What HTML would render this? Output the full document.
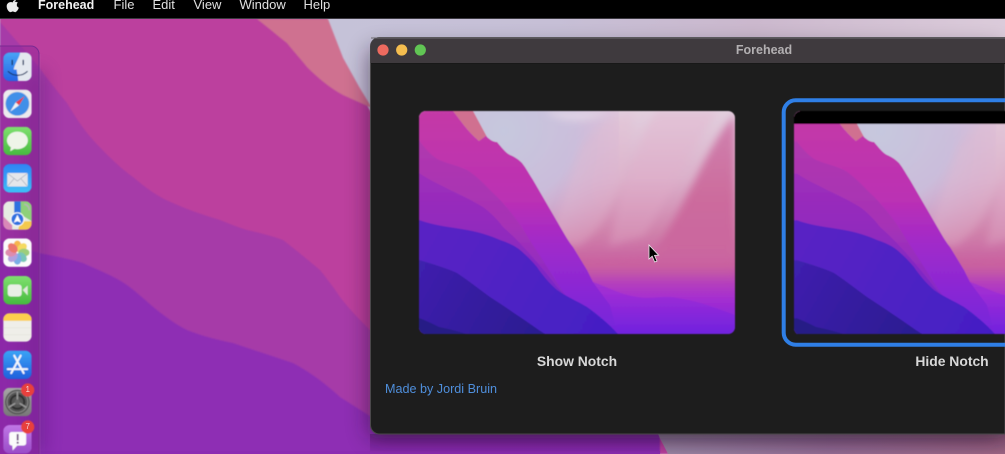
<!DOCTYPE html>
<html><head><meta charset="utf-8">
<style>
html,body{margin:0;padding:0;width:1005px;height:454px;overflow:hidden;background:#000}
#s{position:relative;width:1005px;height:454px;overflow:hidden;font-family:"Liberation Sans",sans-serif}
svg{position:absolute;left:0;top:0;display:block}
.t{position:absolute;white-space:nowrap;line-height:16px}
.m{top:-3px;font-size:13px;color:#e0e0e0}
</style></head><body><div id="s">
<svg width="1005" height="454" viewBox="0 0 1005 454">
<defs>
<linearGradient id="sky" gradientUnits="userSpaceOnUse" x1="0" y1="0" x2="0" y2="223">
<stop offset="0" stop-color="#e2cfde"/><stop offset=".3" stop-color="#dbb0ca"/><stop offset=".55" stop-color="#cf80aa"/><stop offset=".69" stop-color="#c85fa0"/><stop offset=".77" stop-color="#b540bc"/><stop offset=".84" stop-color="#a52ed0"/><stop offset="1" stop-color="#7a24dc"/>
</linearGradient>
<radialGradient id="lav" gradientUnits="userSpaceOnUse" cx="85" cy="20" r="130">
<stop offset="0" stop-color="#c6c8de"/><stop offset=".55" stop-color="#c9bedc" stop-opacity=".9"/><stop offset="1" stop-color="#cfa8d4" stop-opacity="0"/>
</radialGradient>
<linearGradient id="slope" gradientUnits="userSpaceOnUse" x1="0" y1="0" x2="0" y2="170"><stop offset="0" stop-color="#d084b0"/><stop offset=".5" stop-color="#cc6c9d"/><stop offset=".8" stop-color="#cb669e"/><stop offset="1" stop-color="#c85fa0" stop-opacity="0"/></linearGradient>
<linearGradient id="mag" gradientUnits="userSpaceOnUse" x1="0" y1="0" x2="0" y2="223"><stop offset="0" stop-color="#c43aa6"/><stop offset=".4" stop-color="#bb30b4"/><stop offset=".6" stop-color="#a02aca"/><stop offset=".8" stop-color="#8a28d4"/><stop offset="1" stop-color="#7424dc"/></linearGradient>
<linearGradient id="l1" gradientUnits="userSpaceOnUse" x1="0" y1="30" x2="0" y2="200"><stop offset="0" stop-color="#b038ae"/><stop offset=".5" stop-color="#a632b6"/><stop offset="1" stop-color="#7d26cc"/></linearGradient>
<linearGradient id="l2" gradientUnits="userSpaceOnUse" x1="0" y1="60" x2="0" y2="200"><stop offset="0" stop-color="#9e2eba"/><stop offset=".5" stop-color="#8f2abe"/><stop offset="1" stop-color="#6e24cc"/></linearGradient>
<linearGradient id="fr" gradientUnits="userSpaceOnUse" x1="0" y1="180" x2="0" y2="223"><stop offset="0" stop-color="#9a2bd8"/><stop offset="1" stop-color="#6c22e0"/></linearGradient>
<linearGradient id="deep" gradientUnits="userSpaceOnUse" x1="0" y1="110" x2="200" y2="223"><stop offset="0" stop-color="#5a24c4"/><stop offset="1" stop-color="#431fc4"/></linearGradient>
<linearGradient id="dk" gradientUnits="userSpaceOnUse" x1="0" y1="150" x2="126" y2="223"><stop offset="0" stop-color="#3f20ae"/><stop offset="1" stop-color="#2a1c90"/></linearGradient>
<clipPath id="c1"><rect width="316" height="223" rx="7"/></clipPath>
<clipPath id="c2"><rect width="300" height="224" rx="7"/></clipPath>
<filter id="soft" x="-20%" y="-20%" width="140%" height="140%"><feGaussianBlur stdDeviation="4"/></filter>
<filter id="e" x="-2%" y="-2%" width="104%" height="104%"><feGaussianBlur stdDeviation=".5"/></filter>
<g id="wp">
<rect width="316" height="223" fill="url(#sky)"/>
<rect x="0" y="0" width="200" height="155" fill="url(#lav)"/>
<g filter="url(#soft)">
<path d="M125 0C140 10 165 15 190 0Z" fill="#e8dde8" opacity=".7"/>
<path d="M165 35C180 12 195 5 215 0L205 60C195 100 180 120 160 135L125 135C140 110 150 70 165 30Z" fill="#e2bcd2" opacity=".35"/>
<path d="M205 70C222 40 222 20 238 0L300 0C275 30 255 80 225 125L190 135Z" fill="#e2b0cc" opacity=".35"/>
<path d="M316 4C290 30 268 95 232 145L130 150L130 178L316 178Z" fill="url(#slope)"/>
</g>
<path d="M34 0H54L68 26L60 30C48 20 42 10 34 0Z" fill="#d06f90"/>
<path d="M0 0H34C42 10 48 20 60 30L67 25C72 30 75 31 78 31C83 37 87 42 91 44C96 46 100 49 103 52C107 57 110 63 114 69L143 119C147 126 150 131 154 136L168 159L174 171L191 194L199 223H0Z" fill="url(#mag)"/>
<path d="M0 29C6 38 14 46 20 49C30 53 40 55 48 59C58 65 66 74 74 82C85 92 100 110 110 128L150 190L170 223H0Z" fill="url(#l1)"/>
<path d="M0 62C12 70 22 74 31 79C42 84 54 90 64 96C72 102 78 108 84 116C100 130 118 150 138 176L180 223H0Z" fill="url(#l2)"/>
<path d="M174 171C188 176 203 184 218 186C232 189 245 184 258 187C280 190 300 198 316 204V223H199L191 194Z" fill="url(#fr)" opacity=".7"/>
<path d="M0 109C16 115 32 116 48 119C60 121 72 125 81 129C90 132 96 135 101 139C108 145 113 150 118 156C124 165 131 173 138 179C148 186 158 190 168 196C178 203 190 213 199 223H0Z" fill="url(#deep)"/>
<path d="M0 149C14 153 27 157 38 162C50 170 60 178 71 186C82 193 92 200 101 206C110 212 118 218 126 223H0Z" fill="url(#dk)"/>
<path d="M0 207C8 210 14 213 20 216C30 218 38 220 47 223H0Z" fill="#281a86"/>
</g>
<linearGradient id="top" x1="0" y1="0" x2="1" y2="0"><stop offset="0" stop-color="#c4c7dc"/><stop offset=".55" stop-color="#c6bfd6"/><stop offset=".75" stop-color="#cbb8cd"/><stop offset="1" stop-color="#dbcbda"/></linearGradient>
<linearGradient id="bot" gradientUnits="userSpaceOnUse" x1="658" y1="0" x2="1005" y2="0"><stop offset="0" stop-color="#9a86a4"/><stop offset=".5" stop-color="#946c94"/><stop offset="1" stop-color="#9c6484"/></linearGradient>
<linearGradient id="botS" x1="0" y1="0" x2="0" y2="1"><stop offset="0" stop-color="#1a0a24" stop-opacity=".25"/><stop offset="1" stop-color="#1a0a24" stop-opacity="0"/></linearGradient>
<linearGradient id="i1" x1="0" y1="0" x2="0" y2="1"><stop offset="0" stop-color="#48a4f6"/><stop offset="1" stop-color="#2464e4"/></linearGradient>
<linearGradient id="i2" x1="0" y1="0" x2="0" y2="1"><stop offset="0" stop-color="#7fe06f"/><stop offset="1" stop-color="#46bb3f"/></linearGradient>
<linearGradient id="i3" x1="0" y1="0" x2="0" y2="1"><stop offset="0" stop-color="#2f82f4"/><stop offset="1" stop-color="#3ec0f8"/></linearGradient>
<linearGradient id="i4" x1="0" y1="0" x2="0" y2="1"><stop offset="0" stop-color="#a8a8a8"/><stop offset="1" stop-color="#777"/></linearGradient>
<linearGradient id="i5" x1="0" y1="0" x2="0" y2="1"><stop offset="0" stop-color="#c077e6"/><stop offset="1" stop-color="#9a4cc8"/></linearGradient>
<linearGradient id="i6" x1="0" y1="0" x2="0" y2="1"><stop offset="0" stop-color="#3aa4f6"/><stop offset="1" stop-color="#1f5fdc"/></linearGradient>
<filter id="sh" x="-20%" y="-20%" width="140%" height="140%"><feGaussianBlur stdDeviation="11"/></filter>
<filter id="ds" x="-200%" y="-20%" width="500%" height="140%"><feGaussianBlur stdDeviation="9"/></filter>
<filter id="b" x="-10%" y="-10%" width="120%" height="120%"><feGaussianBlur stdDeviation=".5"/></filter>
<filter id="d" x="-3%" y="-3%" width="106%" height="106%"><feGaussianBlur stdDeviation=".9"/></filter>
<clipPath id="ic"><rect width="28.5" height="28.5" rx="6.5"/></clipPath>
</defs>

<!-- desktop -->
<rect width="1005" height="454" fill="url(#top)"/>
<g filter="url(#d)">
<path d="M257 15H326L343 58L358 85L368 107L440 230L658 434L670 454H0V15Z" fill="#bc3f9e"/>
<path d="M257 19C270 29 278 36 287 43C294 52 300 58 307 67C318 78 330 88 343 95L372 108L358 85L343 58L328 19Z" fill="#cf7190"/>
<path d="M0 22C14 38 28 54 39 67C48 80 58 92 67 103C76 118 84 130 93 140C106 154 120 168 133 177C146 188 158 197 173 203C188 210 204 215 220 220C230 224 240 228 247 230C260 233 272 236 283 240C296 250 308 260 320 270C328 280 334 288 340 297C350 310 360 320 372 332L372 454H0Z" fill="#a63aa8"/>
<path d="M0 240L39 253C55 256 70 259 83 263C98 270 114 276 127 285C138 293 147 302 157 310C167 318 177 325 187 330C202 336 218 340 233 343C253 350 273 356 293 363C310 372 326 384 340 397L430 454H0Z" fill="#8e2db4"/>
<rect x="370" y="425" width="290" height="29" fill="#8a2ab0"/>
</g>
<rect y="451" width="660" height="3" fill="#8c2cb2"/>
<rect width="3" y="250" height="204" fill="#8e2db4"/>
<path d="M658 434L668 454H1005V434Z" fill="url(#bot)"/>
<rect x="370" y="434" width="635" height="20" fill="url(#botS)"/>

<!-- dock shadow -->
<rect x="25" y="70" width="20" height="384" fill="#3a0a60" opacity=".3" filter="url(#ds)"/>
<!-- dock -->
<path d="M0 46H31A8 8 0 0 1 39 54V454H0Z" fill="#8a2398" opacity=".45"/>
<path d="M0 46H31A8 8 0 0 1 39 54V454" fill="none" stroke="#7a2a92" stroke-width="1"/>
<path d="M40 54V454" stroke="#c070c0" stroke-opacity=".2"/>

<g filter="url(#b)">
<!-- Finder -->
<g transform="translate(3.2 52.5)" clip-path="url(#ic)">
<rect width="28.5" height="28.5" fill="url(#i1)"/>
<path d="M17 0H28.5V28.5H15C15 24 13.5 20 13.5 17H10.500C11.5 11 16 6 17 0Z" fill="#e4e8ef"/>
<path d="M9 8V12M20 8V12" stroke="#15305e" stroke-width="1.4" stroke-linecap="round"/>
<path d="M5 19C10 24 19 24 24 19" fill="none" stroke="#15305e" stroke-width="1.2" stroke-linecap="round"/>
</g>
<!-- Safari -->
<g transform="translate(3.2 89.6)" clip-path="url(#ic)">
<rect width="28.5" height="28.5" fill="#ecebee"/>
<circle cx="14.2" cy="14.2" r="12" fill="#3f8fe8" stroke="#cfd4dc" stroke-width=".6"/>
<path d="M21.5 6.5L12.5 12.8L15.8 15.8Z" fill="#e8414a"/>
<path d="M7 22L12.5 12.8L15.8 15.8Z" fill="#f2f2f2"/>
</g>
<!-- Messages -->
<g transform="translate(3.2 126.8)" clip-path="url(#ic)">
<rect width="28.5" height="28.5" fill="url(#i2)"/>
<ellipse cx="14.2" cy="13.6" rx="10.5" ry="8.8" fill="#eef4e8"/>
<path d="M8 19L7 24.5L13 21Z" fill="#eef4e8"/>
</g>
<!-- Mail -->
<g transform="translate(3.2 164)" clip-path="url(#ic)">
<rect width="28.5" height="28.5" fill="url(#i3)"/>
<rect x="4" y="9" width="20.5" height="13.5" rx="1" fill="#e4e6ea"/>
<path d="M4.500 9.5L14.2 17L24 9.5M4.500 22L11 14.5M24 22L17.5 14.5" fill="none" stroke="#a9b0bd" stroke-width=".7"/>
</g>
<!-- Maps -->
<g transform="translate(3.2 201.3)" clip-path="url(#ic)">
<rect width="28.5" height="28.5" fill="#e6ece2"/>
<path d="M17 0H28.5V20L17 13Z" fill="#8ed07a"/>
<path d="M0 15L9 24V28.5H0Z" fill="#d988b8"/>
<path d="M17 20L28.5 20V28.5H15Z" fill="#f4c94e"/>
<path d="M21 3A5.500 5.500 0 0 1 26 9" fill="none" stroke="#b5b5b5" stroke-width="1.5"/>
<rect x="11" y="0" width="6.5" height="13" fill="#2f72e0"/>
<circle cx="14.2" cy="18" r="6.5" fill="#2f72e0" stroke="#fff" stroke-width="1"/>
<path d="M14.2 13.5L18 21.5L14.2 19.8L10.5 21.5Z" fill="#fff"/>
</g>
<!-- Photos -->
<g transform="translate(3.2 238.4)" clip-path="url(#ic)">
<rect width="28.5" height="28.5" fill="#fbfbfb"/>
<g transform="translate(14.2 14.2)" opacity=".8">
<ellipse cy="-6.5" rx="4" ry="5.6" fill="#f5a623"/>
<ellipse cy="-6.5" rx="4" ry="5.6" fill="#f3d23a" transform="rotate(45)"/>
<ellipse cy="-6.500" rx="4" ry="5.6" fill="#86c35a" transform="rotate(90)"/>
<ellipse cy="-6.500" rx="4" ry="5.6" fill="#57b9a8" transform="rotate(135)"/>
<ellipse cy="-6.500" rx="4" ry="5.6" fill="#5a9be0" transform="rotate(180)"/>
<ellipse cy="-6.500" rx="4" ry="5.6" fill="#a08ad8" transform="rotate(225)"/>
<ellipse cy="-6.500" rx="4" ry="5.6" fill="#d8709c" transform="rotate(270)"/>
<ellipse cy="-6.500" rx="4" ry="5.6" fill="#e8574c" transform="rotate(315)"/>
</g>
</g>
<!-- FaceTime -->
<g transform="translate(3.2 276)" clip-path="url(#ic)">
<rect width="28.5" height="28.5" fill="url(#i2)"/>
<rect x="4.500" y="8.5" width="14" height="12" rx="3" fill="#e9efe6"/>
<path d="M19.500 14L24.500 9.500V19.500Z" fill="#dfe9da"/>
</g>
<!-- Notes -->
<g transform="translate(3.2 313.3)" clip-path="url(#ic)">
<rect width="28.5" height="28.5" fill="#efeee9"/>
<rect width="28.5" height="7.5" fill="#fcce4d"/>
<path d="M0 14.500H28.5M0 21.500H28.5" stroke="#dfded8" stroke-width=".5"/>
</g>
<!-- App Store -->
<g transform="translate(3.2 350.6)" clip-path="url(#ic)">
<rect width="28.5" height="28.5" fill="url(#i6)"/>
<path d="M11 5L20.500 22.5M17.500 5L8 22.5M4.500 18.500H24" fill="none" stroke="#f4f7fb" stroke-width="2" stroke-linecap="round"/>
</g>
<!-- Settings -->
<g transform="translate(3.2 387.8)" clip-path="url(#ic)">
<rect width="28.5" height="28.5" fill="url(#i4)"/>
<circle cx="14.2" cy="14.2" r="12.4" fill="#555"/>
<circle cx="14.2" cy="14.2" r="10.4" fill="none" stroke="#8a8a8a" stroke-width="1"/>
<circle cx="14.2" cy="14.2" r="6.8" fill="none" stroke="#2e2e2e" stroke-width="2"/>
<path d="M14.2 14.2V4M14.2 14.2L5.500 19.500M14.2 14.2L23 19.500" stroke="#9a9a9a" stroke-width="1.6"/>
<circle cx="14.2" cy="14.2" r="2.6" fill="#666"/>
</g>
<!-- Feedback -->
<g transform="translate(3.2 425)" clip-path="url(#ic)">
<rect width="28.5" height="28.5" fill="url(#i5)"/>
<rect x="6" y="7" width="17" height="13.5" rx="2.5" fill="#fbfbfb"/>
<path d="M9 20L9.500 25.5L14.5 20Z" fill="#fbfbfb"/>
<rect x="13.6" y="9" width="1.8" height="6.5" fill="#6d4a80"/><circle cx="14.5" cy="17.7" r="1.1" fill="#6d4a80"/>
</g>
<circle cx="27.7" cy="390" r="6.6" fill="#e8403e"/>
<circle cx="27.7" cy="427" r="6.6" fill="#e8403e"/>
</g>

<!-- window shadow -->
<rect x="368" y="48" width="637" height="390" rx="9" fill="#1a0a24" opacity=".5" filter="url(#sh)"/>
<!-- window -->
<path d="M1005 37.500H379.500A9 9 0 0 0 370.500 46.500V425A9 9 0 0 0 379.500 434H1005Z" fill="#1d1d1d" stroke="#4a484a" stroke-width="1"/>
<path d="M370.500 63V46A9 9 0 0 1 379 37.500H1005V63Z" fill="#3f3a3e"/>
<path d="M371 38H1005" stroke="#6e6b70" stroke-width="1"/>
<path d="M371 63.500H1005" stroke="#181818" stroke-width="1"/>
<circle cx="383" cy="50" r="5.600" fill="#ee6a5f"/>
<circle cx="401.700" cy="50" r="5.600" fill="#f5bd4f"/>
<circle cx="420.300" cy="50" r="5.600" fill="#61c554"/>

<!-- thumbnails -->
<g filter="url(#e)">
<g transform="translate(419 111)"><g clip-path="url(#c1)"><use href="#wp"/></g></g>
<g transform="translate(794 111)"><g clip-path="url(#c2)">
<use href="#wp"/>
<use href="#wp" transform="translate(2 0)"/>
<rect width="300" height="13" fill="#000"/>
</g></g>
</g>
<path d="M1005 100.300H795.700A12 12 0 0 0 783.700 112.300V332.700A12 12 0 0 0 795.700 344.700H1005" fill="none" stroke="#2f7fe6" stroke-width="4"/>

<!-- cursor -->
<path d="M649 245V259L652.200 256.200L654.700 262L657 261L654.500 255.400L658.600 255.200Z" fill="#000" stroke="#e8e8e8" stroke-width=".8"/>

<!-- menu bar -->
<rect width="1005" height="18.500" fill="#000"/>
<rect y="18" width="1005" height="1" fill="#3b3840"/>
<path d="M13 2.600C14.300 1.800 15.800 1.800 17.600 2.600C16.200 3.700 16 6.600 18.600 7.800C18 9.700 16.400 12 15.200 12C14.300 12 13.800 11.300 12.800 11.300C11.800 11.300 11.300 12 10.300 12C8.800 12 6.700 8.800 6.900 5.800C7.100 3.200 9.400 1.600 13 2.600ZM13 2.400C13 1 14 .5 15.600 0C15.800 .6 14.600 2.200 13 2.400Z" fill="#ececec" stroke="#ececec" stroke-width=".4"/>
</svg>

<div class="t m" style="left:38px;color:#f2f2f2;font-weight:bold;font-size:12.500px">Forehead</div>
<div class="t m" style="left:113.500px">File</div>
<div class="t m" style="left:152.500px">Edit</div>
<div class="t m" style="left:193.500px">View</div>
<div class="t m" style="left:239.500px">Window</div>
<div class="t m" style="left:303.500px">Help</div>

<div class="t" style="left:664px;width:200px;text-align:center;top:42px;font-size:12.500px;font-weight:bold;color:#b3b0b2">Forehead</div>
<div class="t" style="left:477px;width:200px;text-align:center;top:352.500px;font-size:13.900px;font-weight:bold;color:#d8d8d8">Show Notch</div>
<div class="t" style="left:852px;width:200px;text-align:center;top:352.500px;font-size:13.900px;font-weight:bold;color:#d8d8d8">Hide Notch</div>
<div class="t" style="left:385px;top:381px;font-size:12.600px;color:#4f8fdc">Made by Jordi Bruin</div>
<div class="t" style="left:22.700px;width:10px;text-align:center;top:382px;font-size:8px;color:#f6d8d8">1</div>
<div class="t" style="left:22.700px;width:10px;text-align:center;top:419px;font-size:8px;color:#f6d8d8">7</div>
</div></body></html>
